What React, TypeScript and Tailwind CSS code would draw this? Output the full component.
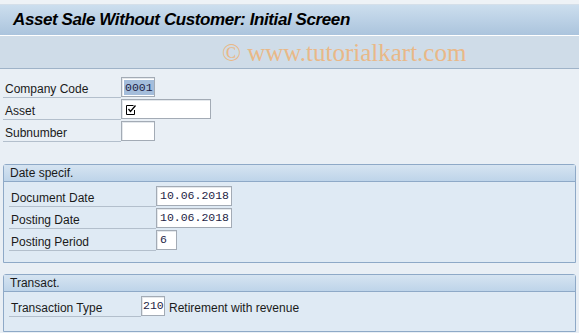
import React from "react";

const labelFont = { fontFamily: '"Liberation Sans", Arial, sans-serif' };

function Field({
  value,
  width,
  highlight,
  tight,
  children,
}: {
  value?: string;
  width: string;
  highlight?: boolean;
  tight?: boolean;
  children?: React.ReactNode;
}) {
  return (
    <div
      className={`${width} ${tight ? "px-[1px]" : "px-[3px]"} h-[20px] bg-white border border-[#a3abb5] shadow-[inset_1px_1px_0_#e4e8ec] flex items-center font-['Liberation_Mono',monospace] text-[11.5px] text-[#1d1d45]`}
    >
      {highlight ? (
        <span className="bg-[#a4bddb] px-[1px] -mx-[1px] leading-[15px]">{value}</span>
      ) : (
        value
      )}
      {children}
    </div>
  );
}

function Row({
  label,
  labelW,
  children,
}: {
  label: string;
  labelW: string;
  children: React.ReactNode;
}) {
  return (
    <div className="flex items-start h-[22px]">
      <div
        className={`${labelW} h-[21px] border-b border-[#b3bfcc] pl-[2px] pt-[3px] text-[12px] text-[#1a1a1a]`}
        style={labelFont}
      >
        {label}
      </div>
      {children}
    </div>
  );
}

function Group({ title, children }: { title: string; children: React.ReactNode }) {
  return (
    <div className="mx-[3px] border border-[#8ea9c7] rounded-t-[3px] bg-[#dfeaf4]">
      <div
        className="h-[17px] bg-gradient-to-b from-[#d6e4f1] to-[#bed4e9] border-b border-[#8ea9c7] pl-[6px] text-[12px] leading-[16px] text-[#1a1a1a]"
        style={labelFont}
      >
        {title}
      </div>
      {children}
    </div>
  );
}

export default function App() {
  return (
    <div className="w-[579px] h-[333px] overflow-hidden bg-[#e9eff5]" style={labelFont}>
      {/* title */}
      <div className="h-[5px] bg-[#eef2f6] border-b border-[#d5dfe9]" />
      <div className="h-[30px] bg-gradient-to-b from-[#ccdeee] to-[#abc4dd] pl-[13px] flex items-center">
        <span className="text-[17px] font-bold italic text-black tracking-[-0.4px]">
          Asset Sale Without Customer: Initial Screen
        </span>
      </div>
      <div className="h-[34px] border-t border-white border-b border-b-[#9fb3c8] bg-[#cfdce8] flex items-center pl-[222px]">
        <span className="font-['Liberation_Serif',serif] text-[25px] text-[#e9b887] leading-none">
          © www.tutorialkart.com
        </span>
      </div>

      {/* header fields */}
      <div className="pl-[3px] pt-[8px]">
        <Row label="Company Code" labelW="w-[118px]">
          <Field width="w-[34px]" value="0001" highlight />
        </Row>
        <Row label="Asset" labelW="w-[118px]">
          <Field width="w-[90px]">
            <svg width="11" height="11" viewBox="0 0 11 11" className="ml-[1px]">
              <path d="M7.5 1.5H0.5V10.5H8.5V6" fill="none" stroke="#000" strokeWidth="1" />
              <path d="M2.5 5L4.5 7.5L9.5 1.5" fill="none" stroke="#000" strokeWidth="1.3" />
            </svg>
          </Field>
        </Row>
        <Row label="Subnumber" labelW="w-[118px]">
          <Field width="w-[34px]" />
        </Row>
      </div>

      <div className="h-[21px]" />

      <Group title="Date specif.">
        <div className="pl-[5px] pt-[4px] pb-[10px]">
          <Row label="Document Date" labelW="w-[147px]">
            <Field width="w-[76px]" value="10.06.2018" />
          </Row>
          <Row label="Posting Date" labelW="w-[147px]">
            <Field width="w-[76px]" value="10.06.2018" />
          </Row>
          <Row label="Posting Period" labelW="w-[147px]">
            <Field width="w-[21px]" value="6" />
          </Row>
        </div>
      </Group>

      <div className="h-[11px]" />

      <Group title="Transact.">
        <div className="pl-[5px] pt-[4px] pb-[13px]">
          <Row label="Transaction Type" labelW="w-[132px]">
            <Field width="w-[24px]" value="210" tight />
            <span className="ml-[4px] pt-[3px] text-[12px] text-[#1a1a1a]">
              Retirement with revenue
            </span>
          </Row>
        </div>
      </Group>
    </div>
  );
}
